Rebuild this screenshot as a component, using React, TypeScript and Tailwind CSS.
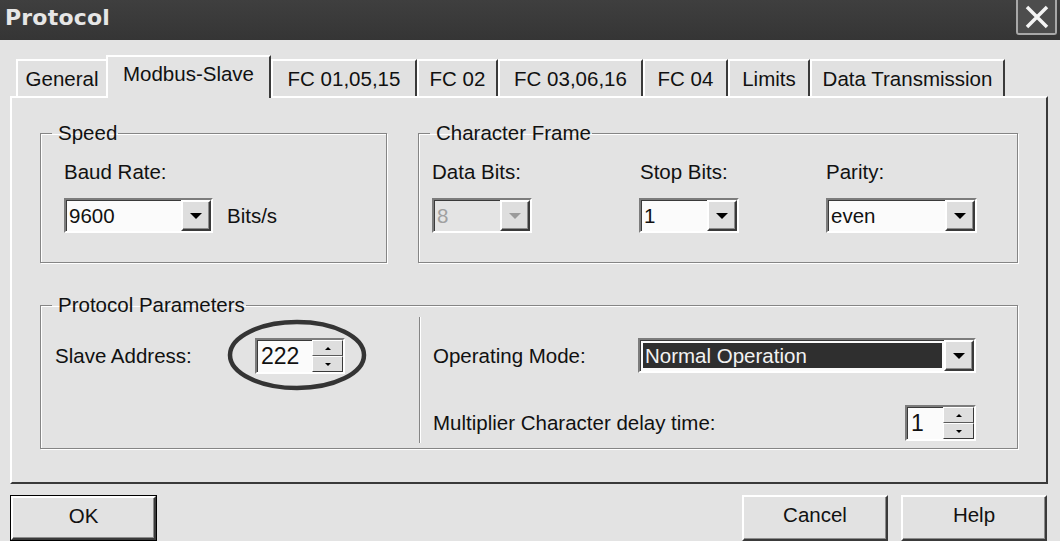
import React from "react";

const raised =
  "border-2 border-t-white border-l-white border-r-[#3a3a3a] border-b-[#3a3a3a] shadow-[inset_-1px_-1px_0_#8c8c8c]";
const sunken =
  "border-2 border-t-[#7c7c7c] border-l-[#7c7c7c] border-r-white border-b-white shadow-[inset_1px_1px_0_#3a3a3a]";
const groupBox = "border border-[#858585] shadow-[inset_1px_1px_0_#fff,1px_1px_0_#fff]";

type TabDef = { label: string; w: string; active?: boolean };

const tabs: TabDef[] = [
  { label: "General", w: "w-[92px]" },
  { label: "Modbus-Slave", w: "w-[165px]", active: true },
  { label: "FC 01,05,15", w: "w-[146px]" },
  { label: "FC 02", w: "w-[81px]" },
  { label: "FC 03,06,16", w: "w-[145px]" },
  { label: "FC 04", w: "w-[85px]" },
  { label: "Limits", w: "w-[82px]" },
  { label: "Data Transmission", w: "w-[195px]" },
];

function Arrow({ dim, small, up }: { dim?: boolean; small?: boolean; up?: boolean }) {
  const size = small ? "border-x-[3px]" : "border-x-[6px]";
  const color = dim ? "#9a9a9a" : "#000";
  return (
    <span
      className={`block h-0 w-0 border-x-transparent ${size} ${
        up
          ? small
            ? "border-b-[3px]"
            : "border-b-[6px]"
          : small
            ? "border-t-[3px]"
            : "border-t-[6px]"
      }`}
      style={up ? { borderBottomColor: color } : { borderTopColor: color }}
    />
  );
}

function Tab({ tab }: { tab: TabDef }) {
  if (tab.active) {
    return (
      <div
        className={`relative z-10 -mb-[2px] -ml-[2px] flex h-[43px] ${tab.w} justify-center border-l-2 border-t-2 border-r-2 border-l-white border-t-white border-r-[#3a3a3a] bg-[#e3e3e3] pt-[5px]`}
      >
        {tab.label}
      </div>
    );
  }
  return (
    <div
      className={`flex h-[37px] ${tab.w} justify-center border-l-2 border-t-2 border-r-2 border-l-white border-t-white border-r-[#3a3a3a] bg-[#e1e1e1] pt-[6px]`}
    >
      {tab.label}
    </div>
  );
}

function Combo({
  value,
  w,
  disabled,
  highlight,
}: {
  value: string;
  w: string;
  disabled?: boolean;
  highlight?: boolean;
}) {
  return (
    <div className={`flex h-[35px] ${w} ${sunken} ${disabled ? "bg-[#e4e4e4]" : "bg-[#fbfbfb]"}`}>
      {highlight ? (
        <div className="m-[3px] mr-[2px] flex flex-1 items-center bg-[#2f2f2f] pl-[2px] text-[#f2f2f2]">
          {value}
        </div>
      ) : (
        <div className={`flex flex-1 items-center pl-[3px] ${disabled ? "text-[#a0a0a0]" : ""}`}>
          {value}
        </div>
      )}
      <div className={`flex w-[30px] items-center justify-center bg-[#dedede] ${raised}`}>
        <Arrow dim={disabled} />
      </div>
    </div>
  );
}

function Spin({ value, w }: { value: string; w: string }) {
  return (
    <div className={`flex h-[36px] ${w} ${sunken} bg-[#fbfbfb]`}>
      <div className="flex flex-1 items-center pl-[4px] text-[23px]">{value}</div>
      <div className="flex w-[31px] flex-col">
        <div className="flex flex-1 items-center justify-center border border-t-white border-l-white border-r-[#3a3a3a] border-b-[#5a5a5a] bg-[#dedede]">
          <Arrow small up />
        </div>
        <div className="flex flex-1 items-center justify-center border border-t-white border-l-white border-r-[#3a3a3a] border-b-[#3a3a3a] bg-[#dedede]">
          <Arrow small />
        </div>
      </div>
    </div>
  );
}

function Legend({ children }: { children: React.ReactNode }) {
  return <legend className="ml-[11px] pl-[6px] pr-[1px] leading-[24px]">{children}</legend>;
}

function Button({ label, isDefault, w }: { label: string; isDefault?: boolean; w: string }) {
  const inner = (
    <div className={`flex h-full w-full justify-center bg-[#e2e2e2] pt-[6px] ${raised}`}>{label}</div>
  );
  return isDefault ? (
    <div className={`h-[46px] ${w} border border-black`}>{inner}</div>
  ) : (
    <div className={`h-[46px] ${w}`}>{inner}</div>
  );
}

export default function App() {
  return (
    <div className="h-[541px] w-[1060px] overflow-hidden bg-[#e3e3e3] font-['Liberation_Sans',Arial,sans-serif] text-[20.5px] leading-[24px] text-[#111]">
      {/* title bar */}
      <div className="flex h-[40px] items-start justify-between bg-gradient-to-b from-[#3f3f3f] to-[#353535] pl-[5px]">
        <div className="pt-[4px] font-['DejaVu_Sans',sans-serif] text-[22px] font-bold leading-[28px] tracking-[0.2px] text-[#e6e6e6]">
          Protocol
        </div>
        <div className="mr-[3px] flex h-[35px] w-[41px] items-center justify-center rounded-b-[3px] border-2 border-t-0 border-[#a8a8a8] bg-[#4d4d4d]">
          <svg width="26" height="24" viewBox="0 0 26 24">
            <path d="M3 2 L23 22 M23 2 L3 22" stroke="#f4f4f4" strokeWidth="3.5" />
          </svg>
        </div>
      </div>

      <div className="pl-[10px] pr-[12px]">
        {/* tabs */}
        <div className="flex items-end pl-[6px] pt-[15px]">
          {tabs.map((t) => (
            <Tab key={t.label} tab={t} />
          ))}
        </div>

        {/* tab page */}
        <div className="h-[388px] border-2 border-t-white border-l-white border-r-[#3a3a3a] border-b-[#3a3a3a] px-[28px] pt-[23px]">
          <div className="flex gap-[31px]">
            <fieldset className={`h-[142px] w-[347px] ${groupBox}`}>
              <Legend>Speed</Legend>
              <div className="pl-[23px] pt-[15px]">
                <div>Baud Rate:</div>
                <div className="mt-[14px] flex items-center">
                  <Combo value="9600" w="w-[149px]" />
                  <span className="ml-[14px]">Bits/s</span>
                </div>
              </div>
            </fieldset>

            <fieldset className={`h-[142px] flex-1 ${groupBox}`}>
              <Legend>Character Frame</Legend>
              <div className="flex pl-[13px] pt-[15px]">
                <div className="w-[207px]">
                  <div>Data Bits:</div>
                  <div className="mt-[14px]">
                    <Combo value="8" w="w-[100px]" disabled />
                  </div>
                </div>
                <div className="w-[187px]">
                  <div className="pl-[1px]">Stop Bits:</div>
                  <div className="mt-[14px]">
                    <Combo value="1" w="w-[100px]" />
                  </div>
                </div>
                <div>
                  <div>Parity:</div>
                  <div className="mt-[14px]">
                    <Combo value="even" w="w-[151px]" />
                  </div>
                </div>
              </div>
            </fieldset>
          </div>

          <fieldset className={`mt-[30px] h-[156px] ${groupBox}`}>
            <Legend>Protocol Parameters</Legend>
            <div className="flex h-[126px]">
              <div className="w-[378px] pl-[14px] pt-[21px]">
                <div className="flex items-center">
                  <span className="w-[200px]">Slave Address:</span>
                  <div className="relative">
                    <Spin value="222" w="w-[90px]" />
                    <svg
                      className="pointer-events-none absolute left-[-28px] top-[-19px]"
                      width="140"
                      height="72"
                      viewBox="0 0 140 72"
                    >
                      <ellipse cx="70" cy="36" rx="67" ry="33" fill="none" stroke="#343434" strokeWidth="4.5" />
                    </svg>
                  </div>
                </div>
              </div>
              <div className="w-[2px] border-l border-r border-l-[#858585] border-r-white" />
              <div className="flex-1 pl-[12px] pr-[41px] pt-[21px]">
                <div className="flex items-center">
                  <span className="w-[205px]">Operating Mode:</span>
                  <div className="flex-1">
                    <Combo value="Normal Operation" w="w-full" highlight />
                  </div>
                </div>
                <div className="mt-[32px] flex items-center justify-between">
                  <span>Multiplier Character delay time:</span>
                  <Spin value="1" w="w-[71px]" />
                </div>
              </div>
            </div>
          </fieldset>
        </div>

        {/* dialog buttons */}
        <div className="mt-[11px] flex justify-between">
          <Button label="OK" isDefault w="w-[147px]" />
          <div className="mr-[1px] flex gap-[13px]">
            <Button label="Cancel" w="w-[146px]" />
            <Button label="Help" w="w-[146px]" />
          </div>
        </div>
      </div>
    </div>
  );
}
